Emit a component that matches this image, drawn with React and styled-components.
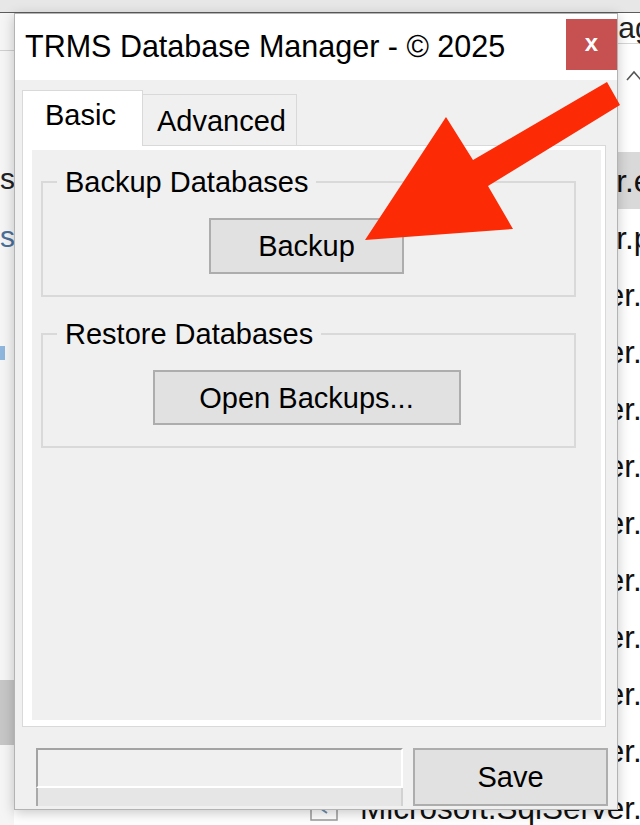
import React from 'react';
import styled, { createGlobalStyle } from 'styled-components';

const Global = createGlobalStyle`
  html, body { margin: 0; padding: 0; background: #ffffff; }
  body { font-family: "Liberation Sans", Arial, sans-serif; }
  #root { width: 640px; height: 825px; }
`;

const FONT = `"Liberation Sans", Arial, sans-serif`;

/* ---------- screen + background application ---------- */
const Screen = styled.div`
  position: relative;
  width: 640px;
  height: 825px;
  overflow: hidden;
  background: #ffffff;
  font-family: ${FONT};
  color: #000;
`;

const Backdrop = styled.div`
  display: grid;
  grid-template-columns: 14px 1fr;
  grid-template-rows: 13px 1fr;
  height: 100%;
`;

const TopStrip = styled.div`
  grid-column: 1 / -1;
  box-sizing: border-box;
  background: #e7e7e7;
  border-bottom: 1px solid #5c5c5c;
`;

const LeftRail = styled.div`
  display: flex;
  flex-direction: column;
  background: #f5f5f5;
  overflow: hidden;
`;

const RailHead = styled.div`
  height: 37px;
  border-bottom: 1px solid #cfcfcf;
`;

const RailList = styled.div`
  display: flex;
  flex-direction: column;
  padding-top: 99px;
`;

const RailItem = styled.div`
  height: 58px;
  display: flex;
  align-items: center;
  font-size: 30px;
  line-height: 30px;
  color: ${p => p.$color || '#222'};
  white-space: nowrap;
`;

const RailMark = styled.span`
  display: block;
  width: 5px;
  height: 14px;
  background: #8fb6dc;
`;

const RailThumb = styled.div`
  margin-top: 298px;
  height: 65px;
  background: #c6c6c6;
`;

const Explorer = styled.div`
  display: flex;
  flex-direction: column;
  background: #ffffff;
  overflow: hidden;
  min-width: 0;
`;

const ExplorerHead = styled.div`
  box-sizing: border-box;
  height: 43px;
  padding-left: 546px;
  border-bottom: 1px solid #d6d6d6;
  font-size: 30px;
  line-height: 30px;
  color: #222;
  white-space: nowrap;
`;

const SortBar = styled.div`
  height: 45px;
  box-sizing: border-box;
  padding: 23px 0 0 612px;
`;

const FileList = styled.div`
  display: flex;
  flex-direction: column;
  margin-top: 67px;
`;

const FileRow = styled.div`
  display: flex;
  align-items: center;
  gap: 22px;
  height: 57px;
  flex: none;
  padding-left: 296px;
  background: ${p => (p.$selected ? '#d9d9d9' : 'transparent')};
  font-size: 31.5px;
  line-height: 34px;
  white-space: nowrap;
  color: #111;
`;

const FileName = styled.span`
  flex: none;
  margin-left: ${p => p.$shift || 0}px;
`;

const IconSvg = styled.svg`
  flex: none;
  display: block;
`;

const FileIcon = () => (
  <IconSvg width="28" height="28" viewBox="0 0 28 28">
    <rect x="1" y="2" width="26" height="24" fill="#fff" stroke="#9a9a9a" strokeWidth="1.5" />
    <path d="M17 9 L10 14 L17 19" fill="none" stroke="#6e8fb0" strokeWidth="2" />
  </IconSvg>
);

/* ---------- dialog window ---------- */
const Window = styled.div`
  position: absolute;
  left: 14px;
  top: 13px;
  width: 604px;
  height: 797px;
  box-sizing: border-box;
  display: flex;
  flex-direction: column;
  border: 1px solid #b3b3b3;
  background: #f0f0f0;
  box-shadow: 0 3px 12px rgba(0, 0, 0, 0.22);
`;

const TitleBar = styled.div`
  display: flex;
  justify-content: space-between;
  align-items: flex-start;
  height: 66px;
  flex: none;
  padding-left: 10px;
  background: #ffffff;
`;

const Title = styled.div`
  margin-top: 14px;
  font-size: 30.5px;
  line-height: 36px;
  white-space: nowrap;
`;

const CloseButton = styled.div`
  width: 51px;
  height: 51px;
  margin-top: 5px;
  display: flex;
  align-items: center;
  justify-content: center;
  background: #c75050;
  color: #ffffff;
  font-size: 24px;
  font-weight: bold;
  line-height: 24px;
  padding-bottom: 3px;
  box-sizing: border-box;
`;

const WindowBody = styled.div`
  flex: 1;
  display: flex;
  flex-direction: column;
`;

const TabArea = styled.div`
  margin: 10px 11px 0 7px;
  display: flex;
  flex-direction: column;
`;

const TabStrip = styled.div`
  display: flex;
  align-items: flex-end;
  height: 56px;
  margin-bottom: -1px;
`;

const Tab = styled.div`
  box-sizing: border-box;
  width: ${p => p.$w}px;
  height: ${p => (p.$active ? 56 : 51)}px;
  margin-bottom: ${p => (p.$active ? 0 : 1)}px;
  padding: ${p => (p.$active ? 7 : 9)}px 0 0 ${p => p.$pl}px;
  background: ${p => (p.$active ? '#ffffff' : '#f0f0f0')};
  border: 1px solid #d9d9d9;
  border-bottom: none;
  border-left-width: ${p => (p.$active ? 1 : 0)}px;
  font-size: 29px;
  line-height: 34px;
  white-space: nowrap;
  ${p => p.$active && 'position: relative; z-index: 1;'}
`;

const Panel = styled.div`
  box-sizing: border-box;
  height: 582px;
  display: flex;
  border: 1px solid #d9d9d9;
  background: #ffffff;
  padding: 4px 4px 6px 9px;
`;

const PanelBody = styled.div`
  flex: 1;
  display: flex;
  flex-direction: column;
  background: #f0f0f0;
  padding: 17px 0 0 9px;
`;

const GroupBox = styled.fieldset`
  box-sizing: border-box;
  width: 535px;
  margin: ${p => (p.$first ? 0 : 22)}px 0 0 0;
  padding: 0;
  border: 2px solid #d9d9d9;
  min-inline-size: 0;
`;

const GroupLabel = styled.legend`
  margin-left: 14px;
  padding: 0 8px;
  font-size: 29px;
  line-height: 30px;
  white-space: nowrap;
`;

const ButtonRow = styled.div`
  display: flex;
  justify-content: center;
  padding: 21px 4px 21px 0;
`;

const PushButton = styled.button`
  box-sizing: border-box;
  width: ${p => p.$w}px;
  height: ${p => p.$h}px;
  margin: 0;
  padding: 0;
  border: 2px solid #adadad;
  background: #e1e1e1;
  color: #000;
  font-family: ${FONT};
  font-size: 29px;
  line-height: 34px;
  white-space: nowrap;
  cursor: default;
`;

const Footer = styled.div`
  display: flex;
  gap: 10px;
  height: 58px;
  margin-top: 21px;
  padding: 0 9px 0 21px;
`;

const StatusBox = styled.div`
  width: 367px;
  display: flex;
  flex-direction: column;
`;

const StatusField = styled.div`
  box-sizing: border-box;
  height: 40px;
  background: #f0f0f0;
  border-top: 2px solid #a3a3a3;
  border-left: 2px solid #a3a3a3;
  border-right: 2px solid #ffffff;
  border-bottom: 2px solid #ffffff;
`;

const StatusTrack = styled.div`
  flex: 1;
  background: #e6e6e6;
  border-left: 2px solid #a9a9a9;
  border-right: 2px solid #d2d2d2;
`;

/* ---------- annotation arrow ---------- */
const ArrowLayer = styled.svg`
  position: absolute;
  left: 0;
  top: 0;
  width: 640px;
  height: 825px;
  pointer-events: none;
  z-index: 10;
`;

const rows = [
  { name: 'Microsoft.SqlServer.exe', shift: -8 },
  { name: 'Microsoft.SqlServer.pdb', shift: -8 },
  ...Array.from({ length: 10 }, () => ({ name: 'Microsoft.SqlServer.Management', shift: 0 })),
];

export default function App() {
  return (
    <>
      <Global />
      <Screen>
        <Backdrop>
          <TopStrip />
          <LeftRail>
            <RailHead />
            <RailList>
              <RailItem>s</RailItem>
              <RailItem $color="#4a6f98">s</RailItem>
              <RailItem />
              <RailItem>
                <RailMark />
              </RailItem>
            </RailList>
            <RailThumb />
          </LeftRail>
          <Explorer>
            <ExplorerHead>Manage</ExplorerHead>
            <SortBar>
              <svg width="16" height="12" viewBox="0 0 16 12">
                <polyline points="1,11 8,3 15,11" fill="none" stroke="#555" strokeWidth="1.6" />
              </svg>
            </SortBar>
            <FileList>
              {rows.map((r, i) => (
                <FileRow key={i} $selected={i === 0}>
                  <FileIcon />
                  <FileName $shift={r.shift}>{r.name}</FileName>
                </FileRow>
              ))}
            </FileList>
          </Explorer>
        </Backdrop>

        <Window>
          <TitleBar>
            <Title>TRMS Database Manager - © 2025</Title>
            <CloseButton>x</CloseButton>
          </TitleBar>
          <WindowBody>
            <TabArea>
              <TabStrip>
                <Tab $active $w={121} $pl={22}>Basic</Tab>
                <Tab $w={154} $pl={14}>Advanced</Tab>
              </TabStrip>
              <Panel>
                <PanelBody>
                  <GroupBox $first>
                    <GroupLabel>Backup Databases</GroupLabel>
                    <ButtonRow>
                      <PushButton $w={195} $h={56}>Backup</PushButton>
                    </ButtonRow>
                  </GroupBox>
                  <GroupBox>
                    <GroupLabel>Restore Databases</GroupLabel>
                    <ButtonRow>
                      <PushButton $w={308} $h={55}>Open Backups...</PushButton>
                    </ButtonRow>
                  </GroupBox>
                </PanelBody>
              </Panel>
            </TabArea>
            <Footer>
              <StatusBox>
                <StatusField />
                <StatusTrack />
              </StatusBox>
              <PushButton $w={195} $h={58}>Save</PushButton>
            </Footer>
          </WindowBody>
        </Window>

        <ArrowLayer viewBox="0 0 640 825">
          <polygon
            points="365,240 446,117 473,160 607,82 620,105 488,186 513,229"
            fill="#fd2a06"
          />
        </ArrowLayer>
      </Screen>
    </>
  );
}
